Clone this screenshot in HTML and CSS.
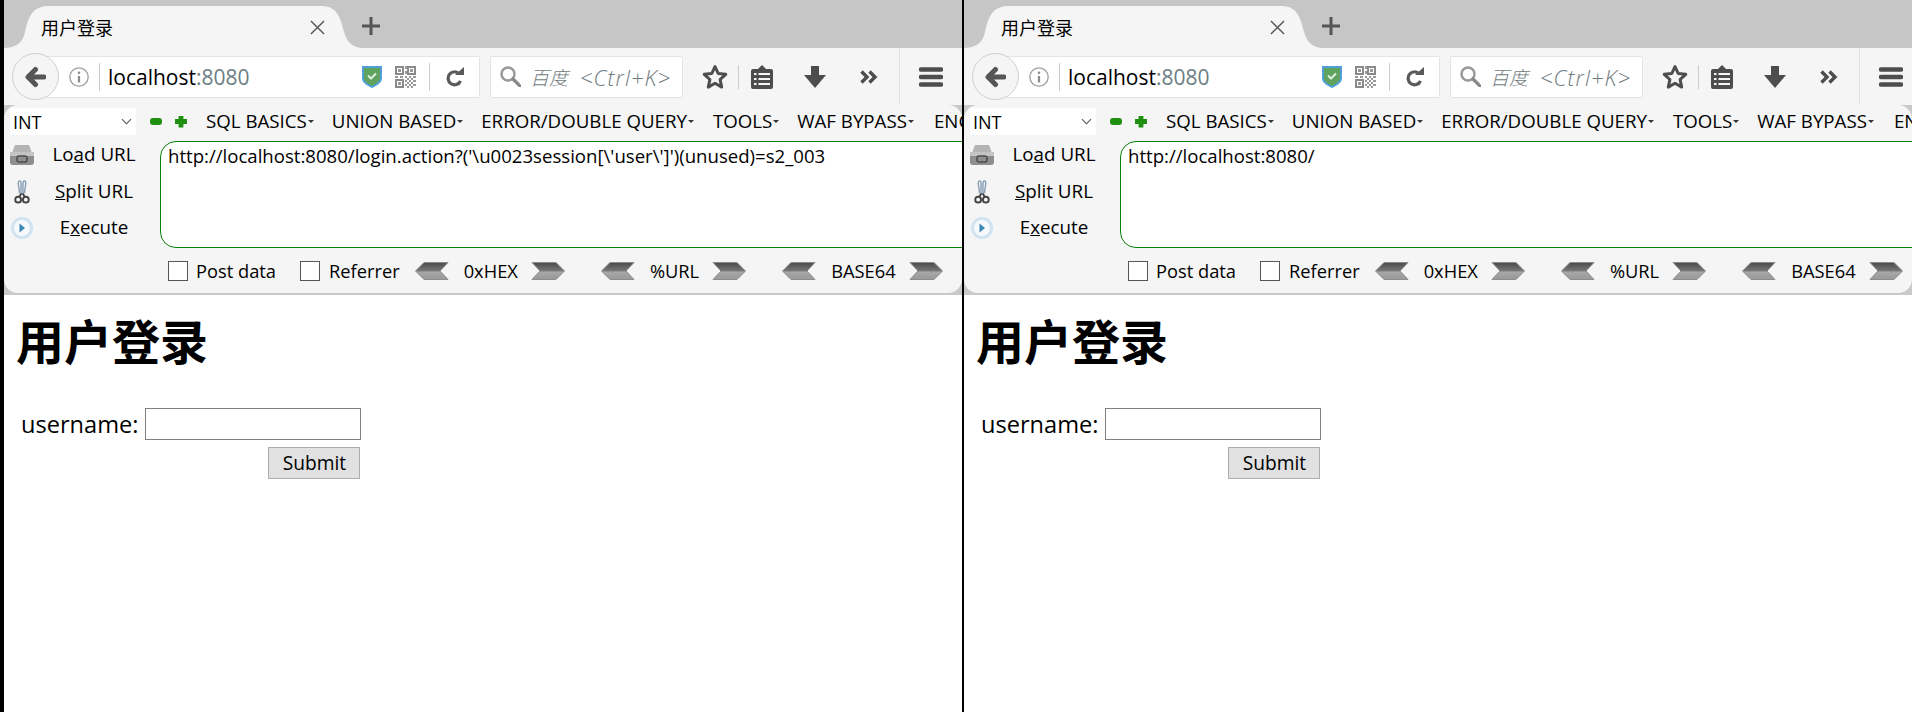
FILE: index.html
```html
<!DOCTYPE html>
<html lang="zh-CN">
<head>
  <meta charset="UTF-8">
  <title>用户登录</title>
  <link rel="stylesheet" href="styles.css">
</head>
<body>
  <!-- shared icons -->
  <svg class="icon-defs" width="0" height="0">
    <defs>
      <linearGradient id="arrow-fill" x1="0" y1="0" x2="0" y2="1">
        <stop offset="0" stop-color="#4a4a4a"/>
        <stop offset="0.5" stop-color="#777"/>
        <stop offset="0.55" stop-color="#a8a8a8"/>
        <stop offset="1" stop-color="#989898"/>
      </linearGradient>
      <symbol id="i-back" viewBox="0 0 22 22"><path d="M20 11H5M11.500 3.500L4 11l7.500 7.500" fill="none" stroke="#555" stroke-width="5" stroke-linecap="round" stroke-linejoin="round"/></symbol>
      <symbol id="i-close" viewBox="0 0 16 16"><path d="M1 1l14 14M15 1L1 15" stroke="#555" stroke-width="1.500"/></symbol>
      <symbol id="i-plus" viewBox="0 0 18 18"><path d="M9 0v18M0 9h18" stroke="#555" stroke-width="3"/></symbol>
      <symbol id="i-info" viewBox="0 0 20 20"><circle cx="10" cy="10" r="9.200" fill="none" stroke="#a0a0a0" stroke-width="1.300"/><circle cx="10" cy="5.800" r="1.300" fill="#8c8c8c"/><path d="M10 9v6.500" stroke="#8c8c8c" stroke-width="2.200"/></symbol>
      <symbol id="i-shield" viewBox="0 0 20 23"><path d="M0 1h20v12.500C20 18 14 21 10 23 6 21 0 18 0 13.500z" fill="#4fa0d8"/><path d="M2 3h16v10.300c0 3.500-5 6-8 7.700-3-1.700-8-4.200-8-7.700z" fill="#5fa35f"/><path d="M6 10.500l3 3 5-5" fill="none" stroke="#dff0df" stroke-width="2"/></symbol>
      <symbol id="i-qr" viewBox="0 0 21 22" shape-rendering="crispEdges">
        <g fill="none" stroke="#8a8a8a" stroke-width="2"><rect x="1" y="1" width="7" height="7"/><rect x="13" y="1" width="7" height="7"/><rect x="1" y="14" width="7" height="7"/></g>
        <g fill="#999"><rect x="3" y="3" width="3" height="3"/><rect x="15" y="3" width="3" height="3"/><rect x="3" y="16" width="3" height="3"/><rect x="10" y="0" width="2" height="3"/><rect x="10" y="5" width="2" height="3"/><rect x="0" y="10" width="3" height="2"/><rect x="5" y="10" width="3" height="2"/><rect x="10" y="10" width="2" height="2"/><rect x="14" y="10" width="2" height="2"/><rect x="18" y="10" width="3" height="2"/><rect x="12" y="12" width="2" height="2"/><rect x="16" y="12" width="2" height="2"/><rect x="10" y="14" width="2" height="2"/><rect x="14" y="14" width="2" height="2"/><rect x="18" y="14" width="3" height="2"/><rect x="12" y="16" width="2" height="2"/><rect x="16" y="16" width="2" height="2"/><rect x="10" y="18" width="2" height="2"/><rect x="14" y="18" width="2" height="2"/><rect x="18" y="18" width="3" height="2"/><rect x="12" y="20" width="2" height="2"/><rect x="16" y="20" width="2" height="2"/></g>
      </symbol>
      <symbol id="i-reload" viewBox="0 0 18 20"><path d="M13.500 7A6.500 6.500 0 1 0 14.500 14" fill="none" stroke="#5a5a5a" stroke-width="3.200"/><path d="M9 8h9V0z" fill="#5a5a5a"/></symbol>
      <symbol id="i-search" viewBox="0 0 21 21"><circle cx="8" cy="8" r="6.500" fill="none" stroke="#999" stroke-width="2.500"/><path d="M13 13l7 7" stroke="#888" stroke-width="3.200" stroke-linecap="round"/></symbol>
      <symbol id="i-star" viewBox="0 0 26 26"><path d="M13 2.500l3.200 7 7.600.8-5.700 5.200 1.600 7.600L13 19.300l-6.700 3.800 1.600-7.600-5.700-5.200 7.600-.8z" fill="none" stroke="#4d4d4d" stroke-width="3" stroke-linejoin="round"/></symbol>
      <symbol id="i-list" viewBox="0 0 22 24"><path d="M2 4h5l4-4 4 4h5a2 2 0 0 1 2 2v16a2 2 0 0 1-2 2H2a2 2 0 0 1-2-2V6a2 2 0 0 1 2-2z" fill="#4d4d4d"/><path d="M3 9h2.500M3 14h2.500M3 19h2.500M7.500 9H19M7.500 14H19M7.500 19H19" stroke="#f5f5f5" stroke-width="2.200"/></symbol>
      <symbol id="i-download" viewBox="0 0 22 22"><path d="M7 0h8v9h7L11 22 0 9h7z" fill="#4d4d4d"/></symbol>
      <symbol id="i-more" viewBox="0 0 18 14"><path d="M1.500 1.500L7 7l-5.500 5.500M9.500 1.500L15 7l-5.500 5.500" fill="none" stroke="#4d4d4d" stroke-width="3.400"/></symbol>
      <symbol id="i-menu" viewBox="0 0 24 20"><path d="M2 2.500h20M2 10h20M2 17.500h20" stroke="#4d4d4d" stroke-width="4.400" stroke-linecap="round"/></symbol>
      <symbol id="i-load" viewBox="0 0 24 22"><path d="M5 1h14l3 8H2z" fill="#b4b4b4"/><rect x="0" y="8" width="24" height="13" rx="3" fill="#8e8e8e"/><rect x="0" y="8" width="24" height="4" fill="#c4c4c4"/><rect x="7" y="12" width="10" height="6" rx="2" fill="none" stroke="#4e4e4e" stroke-width="1.600"/></symbol>
      <symbol id="i-split" viewBox="0 0 16 25"><path d="M5.500 14L4 3c0-2 3-3 3 0v12M10.500 14L12 3c0-2-3-3-3 0v12" fill="none" stroke="#8aa0b8" stroke-width="1.500"/><circle cx="4" cy="20.500" r="3" fill="none" stroke="#444" stroke-width="2"/><circle cx="12" cy="20.500" r="3" fill="none" stroke="#444" stroke-width="2"/><path d="M5 17.500l2.500-3.500M11 17.500L8.500 14" stroke="#444" stroke-width="2"/></symbol>
      <symbol id="i-run" viewBox="0 0 24 24"><circle cx="12" cy="12" r="11" fill="#cfe3f2"/><circle cx="12" cy="12" r="8" fill="#f6f9fc"/><path d="M9.500 7.500l5.500 4.500-5.500 4.500z" fill="#3c86b8"/></symbol>
      <symbol id="i-left" viewBox="0 0 34 18"><path d="M.5 9L9 .5h24L25 9l8 8.500H9z" fill="url(#arrow-fill)" stroke="#8c8c8c"/></symbol>
      <symbol id="i-right" viewBox="0 0 34 18"><path d="M33.500 9L25 .5H1L9 9l-8 8.500h24z" fill="url(#arrow-fill)" stroke="#8c8c8c"/></symbol>
    </defs>
  </svg>

  <div class="desktop">
    <div class="window window-first">
      <div class="tab-strip">
        <div class="tab">
          <span class="tab-title">用户登录</span>
          <svg class="icon-close"><use href="#i-close"/></svg>
        </div>
        <svg class="icon-plus"><use href="#i-plus"/></svg>
      </div>

      <div class="nav-bar">
        <div class="back-btn"><svg class="icon-back"><use href="#i-back"/></svg></div>
        <div class="url-bar">
          <svg class="icon-info"><use href="#i-info"/></svg>
          <span class="url-sep"></span>
          <span class="url-text">localhost<span class="url-port">:8080</span></span>
          <svg class="icon-shield"><use href="#i-shield"/></svg>
          <svg class="icon-qr"><use href="#i-qr"/></svg>
          <span class="url-sep url-sep-end"></span>
          <svg class="icon-reload"><use href="#i-reload"/></svg>
        </div>
        <div class="search-box">
          <svg class="icon-search"><use href="#i-search"/></svg>
          <span class="search-cjk">百度</span>
          <span class="search-hint">&lt;Ctrl+K&gt;</span>
        </div>
        <svg class="icon-star"><use href="#i-star"/></svg>
        <span class="tool-sep"></span>
        <svg class="icon-list"><use href="#i-list"/></svg>
        <svg class="icon-download"><use href="#i-download"/></svg>
        <svg class="icon-more"><use href="#i-more"/></svg>
        <span class="tool-sep-full"></span>
        <svg class="icon-menu"><use href="#i-menu"/></svg>
      </div>

      <div class="hackbar-wrap">
        <div class="hackbar">
          <div class="hack-menu">
            <div class="hack-select">INT<span class="chevron"></span></div>
            <span class="hack-minus"></span>
            <span class="hack-plus"></span>
            <span class="menu-item menu-sql">SQL BASICS</span>
            <span class="menu-item menu-union">UNION BASED</span>
            <span class="menu-item menu-error">ERROR/DOUBLE QUERY</span>
            <span class="menu-item menu-tools">TOOLS</span>
            <span class="menu-item menu-waf">WAF BYPASS</span>
            <span class="menu-item menu-enc">ENCODING</span>
          </div>
          <div class="hack-body">
            <div class="hack-side">
              <div class="side-btn"><svg class="icon-side"><use href="#i-load"/></svg><span class="side-label">Lo<u>a</u>d URL</span></div>
              <div class="side-btn"><svg class="icon-side"><use href="#i-split"/></svg><span class="side-label"><u>S</u>plit URL</span></div>
              <div class="side-btn"><svg class="icon-side"><use href="#i-run"/></svg><span class="side-label">E<u>x</u>ecute</span></div>
            </div>
            <div class="hack-url">http://localhost:8080/login.action?('\u0023session[\'user\']')(unused)=s2_003</div>
          </div>
          <div class="hack-options">
            <span class="check"></span><span class="opt-label opt-post">Post data</span>
            <span class="check check-ref"></span><span class="opt-label opt-ref">Referrer</span>
            <svg class="arrow arrow-first"><use href="#i-left"/></svg><span class="opt-label opt-hex">0xHEX</span><svg class="arrow"><use href="#i-right"/></svg>
            <svg class="arrow arrow-group"><use href="#i-left"/></svg><span class="opt-label opt-url">%URL</span><svg class="arrow"><use href="#i-right"/></svg>
            <svg class="arrow arrow-group"><use href="#i-left"/></svg><span class="opt-label opt-b64">BASE64</span><svg class="arrow"><use href="#i-right"/></svg>
          </div>
        </div>
      </div>

      <div class="page">
        <h1 class="page-title">用户登录</h1>
        <div class="login-form">
          <label class="form-label">username:</label>
          <span class="form-input"></span>
          <span class="form-submit">Submit</span>
        </div>
      </div>
    </div>

    <div class="window window-second">
      <div class="tab-strip">
        <div class="tab">
          <span class="tab-title">用户登录</span>
          <svg class="icon-close"><use href="#i-close"/></svg>
        </div>
        <svg class="icon-plus"><use href="#i-plus"/></svg>
      </div>

      <div class="nav-bar">
        <div class="back-btn"><svg class="icon-back"><use href="#i-back"/></svg></div>
        <div class="url-bar">
          <svg class="icon-info"><use href="#i-info"/></svg>
          <span class="url-sep"></span>
          <span class="url-text">localhost<span class="url-port">:8080</span></span>
          <svg class="icon-shield"><use href="#i-shield"/></svg>
          <svg class="icon-qr"><use href="#i-qr"/></svg>
          <span class="url-sep url-sep-end"></span>
          <svg class="icon-reload"><use href="#i-reload"/></svg>
        </div>
        <div class="search-box">
          <svg class="icon-search"><use href="#i-search"/></svg>
          <span class="search-cjk">百度</span>
          <span class="search-hint">&lt;Ctrl+K&gt;</span>
        </div>
        <svg class="icon-star"><use href="#i-star"/></svg>
        <span class="tool-sep"></span>
        <svg class="icon-list"><use href="#i-list"/></svg>
        <svg class="icon-download"><use href="#i-download"/></svg>
        <svg class="icon-more"><use href="#i-more"/></svg>
        <span class="tool-sep-full"></span>
        <svg class="icon-menu"><use href="#i-menu"/></svg>
      </div>

      <div class="hackbar-wrap">
        <div class="hackbar">
          <div class="hack-menu">
            <div class="hack-select">INT<span class="chevron"></span></div>
            <span class="hack-minus"></span>
            <span class="hack-plus"></span>
            <span class="menu-item menu-sql">SQL BASICS</span>
            <span class="menu-item menu-union">UNION BASED</span>
            <span class="menu-item menu-error">ERROR/DOUBLE QUERY</span>
            <span class="menu-item menu-tools">TOOLS</span>
            <span class="menu-item menu-waf">WAF BYPASS</span>
            <span class="menu-item menu-enc">ENCODING</span>
          </div>
          <div class="hack-body">
            <div class="hack-side">
              <div class="side-btn"><svg class="icon-side"><use href="#i-load"/></svg><span class="side-label">Lo<u>a</u>d URL</span></div>
              <div class="side-btn"><svg class="icon-side"><use href="#i-split"/></svg><span class="side-label"><u>S</u>plit URL</span></div>
              <div class="side-btn"><svg class="icon-side"><use href="#i-run"/></svg><span class="side-label">E<u>x</u>ecute</span></div>
            </div>
            <div class="hack-url">http://localhost:8080/</div>
          </div>
          <div class="hack-options">
            <span class="check"></span><span class="opt-label opt-post">Post data</span>
            <span class="check check-ref"></span><span class="opt-label opt-ref">Referrer</span>
            <svg class="arrow arrow-first"><use href="#i-left"/></svg><span class="opt-label opt-hex">0xHEX</span><svg class="arrow"><use href="#i-right"/></svg>
            <svg class="arrow arrow-group"><use href="#i-left"/></svg><span class="opt-label opt-url">%URL</span><svg class="arrow"><use href="#i-right"/></svg>
            <svg class="arrow arrow-group"><use href="#i-left"/></svg><span class="opt-label opt-b64">BASE64</span><svg class="arrow"><use href="#i-right"/></svg>
          </div>
        </div>
      </div>

      <div class="page">
        <h1 class="page-title">用户登录</h1>
        <div class="login-form">
          <label class="form-label">username:</label>
          <span class="form-input"></span>
          <span class="form-submit">Submit</span>
        </div>
      </div>
    </div>
  </div>
</body>
</html>
```

FILE: styles.css
```css
html, body {
  margin: 0;
  height: 100%;
  overflow: hidden;
}

body {
  background-color: #000;
  color: #000;
  font-family: "Open Sans", "Noto Sans CJK SC", sans-serif;
  font-size: 18px;
}

.icon-defs {
  position: absolute;
}

svg {
  display: block;
  flex: none;
}

.desktop {
  display: flex;
  height: 712px;
  padding-left: 4px;
  box-sizing: border-box;
}

.window {
  background-color: #fff;
  overflow: hidden;
  white-space: nowrap;
}

.window-first {
  width: 958px;
}

.window-second {
  width: 948px;
  margin-left: 2px;
}

/* tabs */
.tab-strip {
  display: flex;
  align-items: flex-start;
  height: 42px;
  padding-top: 6px;
  background-color: #c6c6c6;
}

.tab {
  display: flex;
  align-items: center;
  width: 360px;
  height: 42px;
  background-color: #f5f5f5;
  clip-path: path("M0 42 C10 42 17 38 20 30 C23 20 24 0 44 0 H318 C334 0 337 14 340 26 C343 36 348 42 360 42 Z");
}

.tab-title {
  margin-left: 37px;
  font-family: "Noto Sans CJK SC", sans-serif;
  font-size: 18px;
}

.icon-close {
  width: 15px;
  height: 15px;
  margin-left: 197px;
}

.icon-plus {
  width: 18px;
  height: 18px;
  margin: 11px 0 0 -2px;
}

/* nav bar */
.nav-bar {
  display: flex;
  align-items: center;
  height: 57px;
  padding-left: 8px;
  background-color: #f5f5f5;
}

.back-btn {
  display: flex;
  align-items: center;
  justify-content: center;
  position: relative;
  width: 47px;
  height: 47px;
  box-sizing: border-box;
  border: 1px solid #cfcfcf;
  border-radius: 50%;
  background-color: #f5f5f5;
}

.icon-back {
  width: 22px;
  height: 22px;
  margin-left: -2px;
}

.url-bar {
  display: flex;
  align-items: center;
  width: 444px;
  height: 42px;
  margin-left: -23px;
  box-sizing: border-box;
  border: 1px solid #e4e4e4;
  border-left: 0;
  border-radius: 0 2px 2px 0;
  background-color: #fff;
}

.icon-info {
  width: 20px;
  height: 20px;
  margin-left: 33px;
}

.url-sep {
  width: 1px;
  height: 28px;
  margin-left: 10px;
  background-color: #ccc;
}

.url-text {
  margin-left: 8px;
  font-size: 21px;
  width: 254px;
}

.url-port {
  color: #6b7d82;
}

.icon-shield {
  width: 20px;
  height: 23px;
}

.icon-qr {
  width: 21px;
  height: 22px;
  margin-left: 13px;
}

.url-sep-end {
  margin-left: 13px;
}

.icon-reload {
  width: 18px;
  height: 20px;
  margin-left: 16px;
}

.search-box {
  display: flex;
  align-items: center;
  width: 193px;
  height: 42px;
  margin-left: 10px;
  box-sizing: border-box;
  border: 1px solid #e4e4e4;
  border-radius: 2px;
  background-color: #fff;
  color: #6f7a80;
  font-style: italic;
}

.icon-search {
  width: 21px;
  height: 21px;
  margin-left: 9px;
}

.search-cjk {
  margin-left: 9px;
  font-size: 19px;
  font-weight: 300;
}

.search-hint {
  margin-left: 12px;
  font-size: 22px;
  font-weight: 300;
  letter-spacing: 1px;
}

.icon-star {
  width: 26px;
  height: 26px;
  margin-left: 19px;
}

.tool-sep {
  width: 1px;
  height: 24px;
  margin-left: 10px;
  background-color: #ccc;
}

.icon-list {
  width: 22px;
  height: 24px;
  margin-left: 12px;
}

.icon-download {
  width: 22px;
  height: 22px;
  margin-left: 31px;
}

.icon-more {
  width: 18px;
  height: 14px;
  margin-left: 34px;
}

.tool-sep-full {
  align-self: stretch;
  width: 1px;
  margin-left: 21px;
  background-color: #e2e2e2;
}

.icon-menu {
  width: 24px;
  height: 20px;
  margin-left: 19px;
}

/* hackbar */
.hackbar-wrap {
  padding-bottom: 2px;
  background-color: #c9c9c9;
}

.hackbar {
  height: 188px;
  background-color: #f5f5f5;
  border-radius: 14px;
}

.hack-menu {
  display: flex;
  align-items: center;
  height: 27px;
  padding: 3px 0 0 6px;
}

.hack-menu > * {
  flex: none;
}

.hack-select {
  display: flex;
  align-items: center;
  justify-content: space-between;
  width: 126px;
  height: 27px;
  padding-left: 3px;
  box-sizing: border-box;
  background-color: #fff;
  font-size: 18px;
}

.chevron {
  width: 6px;
  height: 6px;
  margin: -4px 6px 0 0;
  border-right: 1px solid #555;
  border-bottom: 1px solid #555;
  transform: rotate(45deg);
}

.hack-minus {
  width: 12px;
  height: 7px;
  margin-left: 14px;
  border-radius: 3px;
  background-color: #1f8f0f;
}

.hack-plus {
  width: 12px;
  height: 12px;
  margin-left: 13px;
  background-color: #1f8f0f;
  border-radius: 3px;
  clip-path: polygon(30% 0, 70% 0, 70% 30%, 100% 30%, 100% 70%, 70% 70%, 70% 100%, 30% 100%, 30% 70%, 0 70%, 0 30%, 30% 30%);
}

.menu-item {
  display: flex;
  align-items: center;
  margin-top: -2px;
  font-size: 18.700px;
}

.menu-item::after {
  content: "";
  width: 0;
  height: 0;
  margin: 2px 0 0 1px;
  border: 3px solid transparent;
  border-top-color: #333;
  border-bottom: 0;
}

.menu-sql { margin-left: 19px; }
.menu-union { margin-left: 18px; }
.menu-error { margin-left: 18px; }
.menu-tools { margin-left: 19px; }
.menu-waf { margin-left: 18px; }

.hack-menu .menu-enc {
  display: block;
  flex: 1 1 0;
  min-width: 0;
  margin-left: 20px;
  overflow: hidden;
}

.hack-body {
  display: flex;
  height: 113px;
}

.hack-side {
  width: 156px;
  padding-top: 1px;
  flex: none;
}

.side-btn {
  display: flex;
  align-items: center;
  height: 36.500px;
  padding-left: 6px;
}

.icon-side {
  width: 24px;
  height: 24px;
  margin-top: 2px;
}

.side-label {
  width: 120px;
  text-align: center;
  font-size: 18.800px;
}

.hack-url {
  flex: 1;
  height: 107px;
  margin-top: 6px;
  margin-right: -20px;
  padding: 1px 7px;
  box-sizing: border-box;
  border: 1px solid #0a800a;
  border-radius: 16px;
  background-color: #fff;
  font-size: 18.600px;
}

.hack-options {
  display: flex;
  align-items: center;
  height: 45px;
  padding: 0 0 0 164px;
  font-size: 18.300px;
}

.check {
  width: 20px;
  height: 20px;
  box-sizing: border-box;
  border: 1px solid #555;
  background-color: #fff;
}

.check-ref {
  margin-left: 24px;
}

.opt-label {
  margin-left: 8px;
}

.opt-ref {
  margin-left: 9px;
}

.arrow {
  width: 34px;
  height: 18px;
}

.arrow-first {
  margin-left: 15px;
}

.arrow-group {
  margin-left: 36px;
}

.opt-hex, .opt-url, .opt-b64 {
  margin: 0 13px 0 15px;
}

/* page content */
.page {
  padding: 20px 0 0 12px;
}

.page-title {
  margin: 0;
  height: 48px;
  line-height: 48px;
  font-family: "Noto Sans CJK SC", sans-serif;
  font-size: 48px;
  font-weight: 700;
}

.login-form {
  display: grid;
  grid-template-columns: auto 223px;
  grid-row-gap: 7px;
  align-items: center;
  justify-content: start;
  margin-top: 45px;
  padding-left: 5px;
  font-size: 23.600px;
}

.form-input {
  height: 32px;
  box-sizing: border-box;
  margin-left: 7px;
  border: 1px solid #808080;
}

.form-submit {
  grid-column: 2;
  justify-self: end;
  width: 92px;
  height: 32px;
  margin-right: 1px;
  box-sizing: border-box;
  border: 1px solid #adadad;
  background-color: #e1e1e1;
  font-size: 19.200px;
  line-height: 30px;
  text-align: center;
}
```
